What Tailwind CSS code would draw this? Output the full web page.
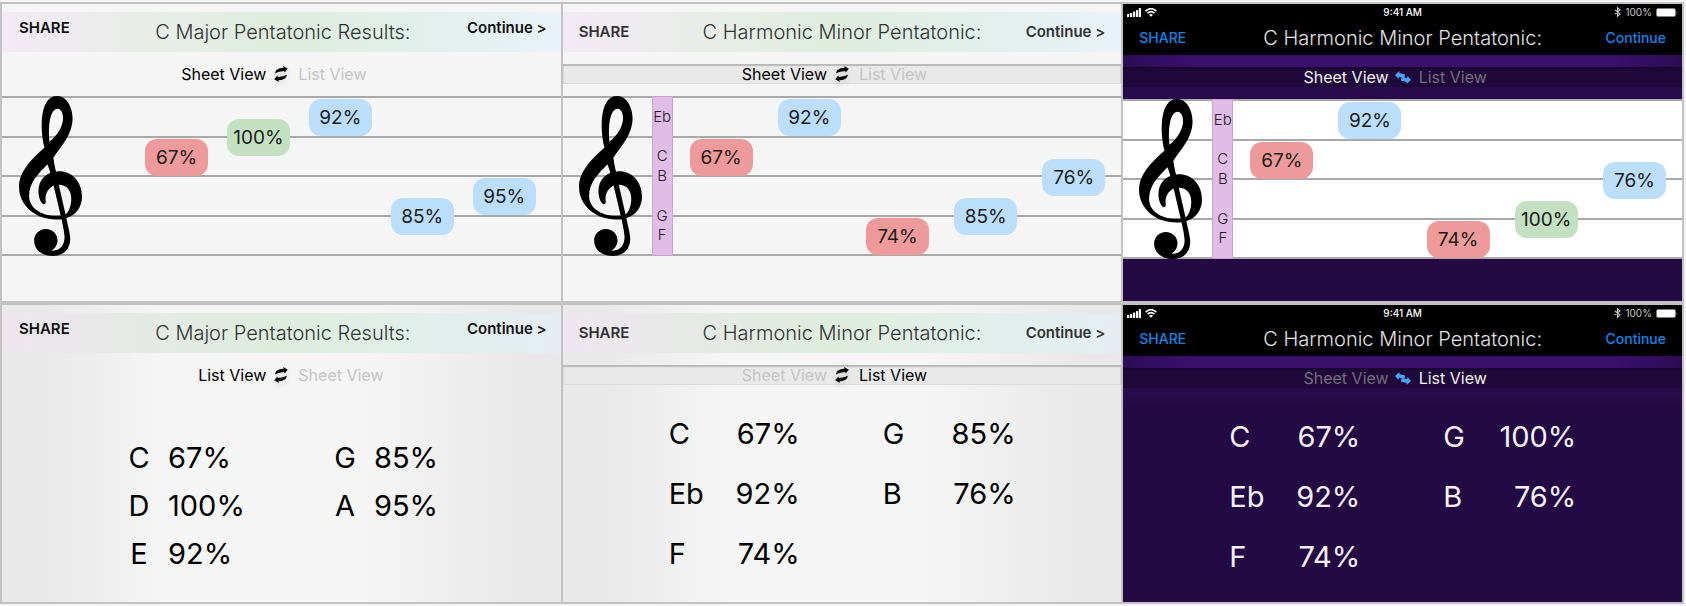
<!DOCTYPE html>
<html lang="en">
<head>
<meta charset="utf-8">
<title>Pentatonic Results</title>
<script src="https://cdn.jsdelivr.net/npm/@tailwindcss/browser@4"></script>
</head>
<body class="min-h-screen bg-[#f4f4f4] pt-0.5 pr-0.5 pb-0.5 font-[Inter,'Liberation_Sans',sans-serif] text-black">

<svg width="0" height="0" class="hidden" aria-hidden="true">
  <symbol id="clef" viewBox="27 18 188 478">
    <path fill-rule="evenodd" d="M103 172C88 112 90 18 140 18C172 18 187 55 187 86C187 132 154 166 129 203L134 245L121 247L112 222C86 249 57 276 57 316C57 352 92 376 138 376C150 376 155 376 162 374C176 368 183 346 183 325C183 300 170 283 145 283C120 283 102 306 107 333C107 341 100 344 95 338C88 328 85 316 85 302C85 268 110 243 146 243C185 243 215 274 215 318C215 357 188 387 138 387C76 387 27 345 27 290C27 242 66 206 103 172ZM118 155C138 138 153 118 158 92C160 76 156 56 142 56C121 58 113 100 118 155Z"/>
    <path d="M110 205L128 200L146 284L168 381C174 410 180 430 180 444C180 478 158 496 128 496C95 496 72 478 72 450C72 430 88 415 107 415C127 415 142 430 142 450C142 463 134 474 124 480C150 482 164 462 163 438C161 415 157 402 154 387L130 284Z"/>
  </symbol>
  <symbol id="cycle" viewBox="0 0 14 16">
    <path d="M1.200 7.600C1.200 4.600 3.600 2.600 7 2.100L9.600 1.700L9.200 0L13.800 2.800L10.600 6.600L10.200 5L7 5.500C4.600 5.900 2.600 6.400 1.200 7.600Z"/>
    <path d="M12.800 8.400C12.800 11.400 10.400 13.400 7 13.900L4.400 14.300L4.800 16L.2 13.200L3.400 9.400L3.800 11L7 10.500C9.400 10.100 11.400 9.600 12.800 8.400Z"/>
  </symbol>
  <symbol id="swap" viewBox="0 0 16 13">
    <path d="M0 4L4.500 0L4.400 2.100L10.200 3.400L9.400 6.900L3.900 5.700L3.500 8Z"/>
    <path d="M16 9L11.500 13L11.600 10.900L5.800 9.600L6.600 6.100L12.100 7.300L12.500 5Z"/>
  </symbol>
  <symbol id="signal" viewBox="0 0 14 9">
    <rect x="0" y="6" width="2.200" height="3" rx=".5"/><rect x="3" y="5" width="2.200" height="4" rx=".5"/><rect x="6" y="3.500" width="2.200" height="5.500" rx=".5"/><rect x="9" y="2" width="2.200" height="7" rx=".5"/><rect x="11.800" y="0" width="2.200" height="9" rx=".5"/>
  </symbol>
  <symbol id="wifi" viewBox="0 0 12 9">
    <path d="M.6 3.200Q6-1.800 11.400 3.200M2.500 5.200Q6 2 9.500 5.200" fill="none" stroke="currentColor" stroke-width="1.700"/>
    <path d="M6 8.800L4 6.700Q6 5.100 8 6.700Z"/>
  </symbol>
  <symbol id="bluetooth" viewBox="0 0 7 10">
    <path d="M1 3L6 7L3.500 9.300V.7L6 3L1 7" fill="none" stroke="currentColor" stroke-width="1.100"/>
  </symbol>
  <symbol id="battery" viewBox="0 0 22 9">
    <rect x=".5" y=".5" width="19" height="8" rx="1.500" fill="none" stroke="currentColor" stroke-opacity=".5"/>
    <rect x="1" y="1" width="18" height="7" rx=".8"/><path d="M20.500 3Q22 4.500 20.500 6Z" opacity=".6"/>
  </symbol>
</svg>

<main class="grid min-h-[602px] grid-cols-1 gap-x-0.5 gap-y-1 bg-[#c2c2c2] p-0.5 md:grid-cols-3 md:grid-rows-2">

  <!-- Major pentatonic, sheet view -->
  <section class="bg-[#f5f5f5] pt-2">
    <header class="grid h-10 grid-cols-[1fr_auto_1fr] items-center bg-linear-[90deg,#f4eaf5_0%,#ececec_17%,#deedde_50%,#e1efea_72%,#eaf2f9_100%] pr-3.5 pl-[17px]">
      <button class="mt-1.5 self-start justify-self-start text-[15px]/5 font-semibold text-[#111]">SHARE</button>
      <h2 class="text-xl font-light text-[#333]">C Major Pentatonic Results:</h2>
      <button class="mt-1.5 self-start justify-self-end text-[15px]/5 font-semibold text-[#111]">Continue &gt;</button>
    </header>
    <div class="mt-3 grid h-5 grid-cols-[1fr_auto_1fr] items-center text-base/5">
      <button class="justify-self-end">Sheet View</button>
      <button aria-label="Switch view" class="mx-2"><svg class="h-4 w-3.5 drop-shadow-md"><use href="#cycle"/></svg></button>
      <button class="ml-0.5 justify-self-start text-[#c4c4c4]">List View</button>
    </div>
    <div class="mt-3 grid h-40">
      <div class="[grid-area:1/1] grid grid-rows-4 border-b-2 border-[#a9a9a9]"><i class="border-t-2 border-[#a9a9a9]"></i><i class="border-t-2 border-[#a9a9a9]"></i><i class="border-t-2 border-[#a9a9a9]"></i><i class="border-t-2 border-[#a9a9a9]"></i></div>
      <div class="[grid-area:1/1] flex pr-[25px] pl-[17px]">
        <svg class="h-40 w-[63px] shrink-0"><use href="#clef"/></svg>
        <div class="ml-[63px] grid flex-1 grid-cols-[repeat(5,63px)] grid-rows-8 items-center justify-between pt-0.5 text-center text-[#1b1b1b]">
          <span class="col-start-1 row-span-2 row-start-3 rounded-xl bg-[#ef9a9a] text-[19px]/[37px]">67%</span>
          <span class="col-start-2 row-span-2 row-start-2 rounded-xl bg-[#c3e1c1] text-[19px]/[37px]">100%</span>
          <span class="col-start-3 row-span-2 row-start-1 rounded-xl bg-[#bbdefb] text-[19px]/[37px]">92%</span>
          <span class="col-start-4 row-span-2 row-start-6 rounded-xl bg-[#bbdefb] text-[19px]/[37px]">85%</span>
          <span class="col-start-5 row-span-2 row-start-5 rounded-xl bg-[#bbdefb] text-[19px]/[37px]">95%</span>
        </div>
      </div>
    </div>
  </section>

  <!-- Harmonic minor, sheet view -->
  <section class="bg-[#f5f5f5] pt-2">
    <header class="grid h-10 grid-cols-[1fr_auto_1fr] items-center bg-linear-[90deg,#f4eaf5_0%,#ececec_17%,#deedde_50%,#e1efea_72%,#eaf2f9_100%] px-4">
      <button class="justify-self-start text-[15px]/5 font-semibold text-[#333]">SHARE</button>
      <h2 class="text-xl font-light text-[#333]">C Harmonic Minor Pentatonic:</h2>
      <button class="justify-self-end text-[15px]/5 font-semibold text-[#333]">Continue &gt;</button>
    </header>
    <div class="mt-3 grid h-5 grid-cols-[1fr_auto_1fr] items-center bg-[#e9e9e9] text-base/5 shadow-[inset_0_2px_1px_#b8b8b8,inset_0_0_0_1px_#dadada]">
      <button class="justify-self-end">Sheet View</button>
      <button aria-label="Switch view" class="mx-2"><svg class="h-4 w-3.5 drop-shadow-md"><use href="#cycle"/></svg></button>
      <button class="ml-0.5 justify-self-start text-[#c4c4c4]">List View</button>
    </div>
    <div class="mt-3 grid h-40">
      <div class="[grid-area:1/1] grid grid-rows-4 border-b-2 border-[#a9a9a9]"><i class="border-t-2 border-[#a9a9a9]"></i><i class="border-t-2 border-[#a9a9a9]"></i><i class="border-t-2 border-[#a9a9a9]"></i><i class="border-t-2 border-[#a9a9a9]"></i></div>
      <div class="[grid-area:1/1] flex px-4">
        <svg class="h-40 w-[63px] shrink-0"><use href="#clef"/></svg>
        <div class="ml-2.5 grid w-[21px] grid-rows-8 items-center justify-center border border-[#c9a4d0] bg-[#e0bce7] text-center text-[15px]/5 font-light text-[#222]">
          <span class="row-span-2 row-start-1">Eb</span><span class="row-span-2 row-start-3 col-start-1">C</span><span class="row-span-2 row-start-4 col-start-1">B</span><span class="row-span-2 row-start-6 col-start-1">G</span><span class="row-span-2 row-start-7 col-start-1">F</span>
        </div>
        <div class="ml-[17px] grid flex-1 grid-cols-[repeat(5,63px)] grid-rows-8 items-center justify-between pt-0.5 text-center text-[#1b1b1b]">
          <span class="col-start-1 row-span-2 row-start-3 rounded-xl bg-[#ef9a9a] text-[19px]/[37px]">67%</span>
          <span class="col-start-2 row-span-2 row-start-1 rounded-xl bg-[#bbdefb] text-[19px]/[37px]">92%</span>
          <span class="col-start-3 row-span-2 row-start-7 rounded-xl bg-[#ef9a9a] text-[19px]/[37px]">74%</span>
          <span class="col-start-4 row-span-2 row-start-6 rounded-xl bg-[#bbdefb] text-[19px]/[37px]">85%</span>
          <span class="col-start-5 row-span-2 row-start-4 rounded-xl bg-[#bbdefb] text-[19px]/[37px]">76%</span>
        </div>
      </div>
    </div>
  </section>

  <!-- Harmonic minor, dark, sheet view -->
  <section class="bg-[#240a44]">
    <div class="grid h-4 grid-cols-[1fr_auto_1fr] items-center bg-black px-1 text-[10px]/4 text-white">
      <div class="flex gap-1"><svg class="h-[9px] w-3.5 fill-current"><use href="#signal"/></svg><svg class="h-[9px] w-3 fill-current"><use href="#wifi"/></svg></div>
      <span class="font-medium">9:41 AM</span>
      <div class="flex items-center gap-1 justify-self-end"><svg class="h-2.5 w-[7px] text-[#ccc]"><use href="#bluetooth"/></svg><span class="text-[#ccc]">100%</span><svg class="h-[9px] w-[22px] fill-current"><use href="#battery"/></svg></div>
    </div>
    <header class="grid h-[35px] grid-cols-[1fr_auto_1fr] items-center bg-black px-4">
      <button class="justify-self-start text-sm/5 font-medium text-[#0f86ee]">SHARE</button>
      <h2 class="text-xl font-light text-[#e2e2e2]">C Harmonic Minor Pentatonic:</h2>
      <button class="justify-self-end text-sm/5 font-medium text-[#0f86ee]">Continue</button>
    </header>
    <div class="h-3 bg-linear-[90deg,#2c0c54_0%,#3a0f6e_12%,#3a0f6e_88%,#2c0c54_100%]"></div>
    <div class="grid h-5 grid-cols-[1fr_auto_1fr] items-center bg-[#1f093a] text-base/5 text-[#f0f0f0] shadow-[inset_0_2px_2px_#18062f]">
      <button class="justify-self-end">Sheet View</button>
      <button aria-label="Switch view" class="mx-1.5"><svg class="h-[13px] w-4 fill-[#42a5f5]"><use href="#swap"/></svg></button>
      <button class="ml-0.5 justify-self-start text-[#746c7c]">List View</button>
    </div>
    <div class="h-3 bg-[#290b4d]"></div>
    <div class="grid h-40 bg-white">
      <div class="[grid-area:1/1] grid grid-rows-4 border-b-2 border-[#a9a9a9]"><i class="border-t-2 border-[#a9a9a9]"></i><i class="border-t-2 border-[#a9a9a9]"></i><i class="border-t-2 border-[#a9a9a9]"></i><i class="border-t-2 border-[#a9a9a9]"></i></div>
      <div class="[grid-area:1/1] flex px-4">
        <svg class="h-40 w-[63px] shrink-0"><use href="#clef"/></svg>
        <div class="ml-2.5 grid w-[21px] grid-rows-8 items-center justify-center border border-[#c9a4d0] bg-[#e0bce7] text-center text-[15px]/5 font-light text-[#222]">
          <span class="row-span-2 row-start-1">Eb</span><span class="row-span-2 row-start-3 col-start-1">C</span><span class="row-span-2 row-start-4 col-start-1">B</span><span class="row-span-2 row-start-6 col-start-1">G</span><span class="row-span-2 row-start-7 col-start-1">F</span>
        </div>
        <div class="ml-[17px] grid flex-1 grid-cols-[repeat(5,63px)] grid-rows-8 items-center justify-between pt-0.5 text-center text-[#1b1b1b]">
          <span class="col-start-1 row-span-2 row-start-3 rounded-xl bg-[#ef9a9a] text-[19px]/[37px]">67%</span>
          <span class="col-start-2 row-span-2 row-start-1 rounded-xl bg-[#bbdefb] text-[19px]/[37px]">92%</span>
          <span class="col-start-3 row-span-2 row-start-7 rounded-xl bg-[#ef9a9a] text-[19px]/[37px]">74%</span>
          <span class="col-start-4 row-span-2 row-start-6 rounded-xl bg-[#c3e1c1] text-[19px]/[37px]">100%</span>
          <span class="col-start-5 row-span-2 row-start-4 rounded-xl bg-[#bbdefb] text-[19px]/[37px]">76%</span>
        </div>
      </div>
    </div>
  </section>

  <!-- Major pentatonic, list view -->
  <section class="bg-linear-[90deg,#e9e9e9_8%,#f5f5f5_29%,#f5f5f5_65%,#e9e9e9_92%] pt-2">
    <header class="grid h-10 grid-cols-[1fr_auto_1fr] items-center bg-linear-[90deg,#efe6f0_0%,#e8e8e8_17%,#deedde_50%,#e1efea_72%,#e5edf3_100%] pr-3.5 pl-[17px]">
      <button class="mt-1.5 self-start justify-self-start text-[15px]/5 font-semibold text-[#111]">SHARE</button>
      <h2 class="text-xl font-light text-[#333]">C Major Pentatonic Results:</h2>
      <button class="mt-1.5 self-start justify-self-end text-[15px]/5 font-semibold text-[#111]">Continue &gt;</button>
    </header>
    <div class="mt-3 grid h-5 grid-cols-[1fr_auto_1fr] items-center text-base/5">
      <button class="justify-self-end">List View</button>
      <button aria-label="Switch view" class="mx-2"><svg class="h-4 w-3.5 drop-shadow-md"><use href="#cycle"/></svg></button>
      <button class="ml-0.5 justify-self-start text-[#c4c4c4]">Sheet View</button>
    </div>
    <div class="mt-[49px] grid grid-cols-[206px_auto] justify-start pl-[126px] text-[29px]/12">
      <dl class="grid grid-cols-[22px_auto] content-start justify-start gap-x-[18px]">
        <dt class="text-center">C</dt><dd>67%</dd>
        <dt class="text-center">D</dt><dd>100%</dd>
        <dt class="text-center">E</dt><dd>92%</dd>
      </dl>
      <dl class="grid grid-cols-[22px_auto] content-start justify-start gap-x-[18px]">
        <dt class="text-center">G</dt><dd>85%</dd>
        <dt class="text-center">A</dt><dd>95%</dd>
      </dl>
    </div>
  </section>

  <!-- Harmonic minor, list view -->
  <section class="bg-linear-[90deg,#e9e9e9_8%,#f5f5f5_29%,#f5f5f5_65%,#e9e9e9_92%] pt-2">
    <header class="grid h-10 grid-cols-[1fr_auto_1fr] items-center bg-linear-[90deg,#efe6f0_0%,#e8e8e8_17%,#deedde_50%,#e1efea_72%,#e5edf3_100%] px-4">
      <button class="justify-self-start text-[15px]/5 font-semibold text-[#333]">SHARE</button>
      <h2 class="text-xl font-light text-[#333]">C Harmonic Minor Pentatonic:</h2>
      <button class="justify-self-end text-[15px]/5 font-semibold text-[#333]">Continue &gt;</button>
    </header>
    <div class="mt-3 grid h-5 grid-cols-[1fr_auto_1fr] items-center bg-[#e9e9e9] text-base/5 shadow-[inset_0_2px_1px_#b8b8b8,inset_0_0_0_1px_#dadada]">
      <button class="justify-self-end text-[#c4c4c4]">Sheet View</button>
      <button aria-label="Switch view" class="mx-2"><svg class="h-4 w-3.5 drop-shadow-md"><use href="#cycle"/></svg></button>
      <button class="ml-0.5 justify-self-start">List View</button>
    </div>
    <div class="mt-[19px] grid grid-cols-[131px_133px] gap-x-[83px] pl-[106px] text-[29px]/[60px]">
      <dl class="grid grid-cols-[auto_auto] content-start justify-between">
        <dt>C</dt><dd class="text-right">67%</dd>
        <dt>Eb</dt><dd class="text-right">92%</dd>
        <dt>F</dt><dd class="text-right">74%</dd>
      </dl>
      <dl class="grid grid-cols-[auto_auto] content-start justify-between">
        <dt>G</dt><dd class="text-right">85%</dd>
        <dt>B</dt><dd class="text-right">76%</dd>
      </dl>
    </div>
  </section>

  <!-- Harmonic minor, dark, list view -->
  <section class="bg-[#240a44]">
    <div class="grid h-4 grid-cols-[1fr_auto_1fr] items-center bg-black px-1 text-[10px]/4 text-white">
      <div class="flex gap-1"><svg class="h-[9px] w-3.5 fill-current"><use href="#signal"/></svg><svg class="h-[9px] w-3 fill-current"><use href="#wifi"/></svg></div>
      <span class="font-medium">9:41 AM</span>
      <div class="flex items-center gap-1 justify-self-end"><svg class="h-2.5 w-[7px] text-[#ccc]"><use href="#bluetooth"/></svg><span class="text-[#ccc]">100%</span><svg class="h-[9px] w-[22px] fill-current"><use href="#battery"/></svg></div>
    </div>
    <header class="grid h-[35px] grid-cols-[1fr_auto_1fr] items-center bg-black px-4">
      <button class="justify-self-start text-sm/5 font-medium text-[#0f86ee]">SHARE</button>
      <h2 class="text-xl font-light text-[#e2e2e2]">C Harmonic Minor Pentatonic:</h2>
      <button class="justify-self-end text-sm/5 font-medium text-[#0f86ee]">Continue</button>
    </header>
    <div class="h-3 bg-linear-[90deg,#2c0c54_0%,#3a0f6e_12%,#3a0f6e_88%,#2c0c54_100%]"></div>
    <div class="grid h-5 grid-cols-[1fr_auto_1fr] items-center bg-[#1f093a] text-base/5 text-[#f0f0f0] shadow-[inset_0_2px_2px_#18062f]">
      <button class="justify-self-end text-[#746c7c]">Sheet View</button>
      <button aria-label="Switch view" class="mx-1.5"><svg class="h-[13px] w-4 fill-[#42a5f5]"><use href="#swap"/></svg></button>
      <button class="ml-0.5 justify-self-start">List View</button>
    </div>
    <div class="grid grid-cols-[131px_133px] gap-x-[83px] bg-linear-[180deg,#290b4d_0px,#240a44_20px] pt-[19px] pl-[106px] text-[29px]/[60px] text-[#f4f2f6]">
      <dl class="grid grid-cols-[auto_auto] content-start justify-between">
        <dt>C</dt><dd class="text-right">67%</dd>
        <dt>Eb</dt><dd class="text-right">92%</dd>
        <dt>F</dt><dd class="text-right">74%</dd>
      </dl>
      <dl class="grid grid-cols-[auto_auto] content-start justify-between">
        <dt>G</dt><dd class="text-right">100%</dd>
        <dt>B</dt><dd class="text-right">76%</dd>
      </dl>
    </div>
  </section>
</main>
</body>
</html>
